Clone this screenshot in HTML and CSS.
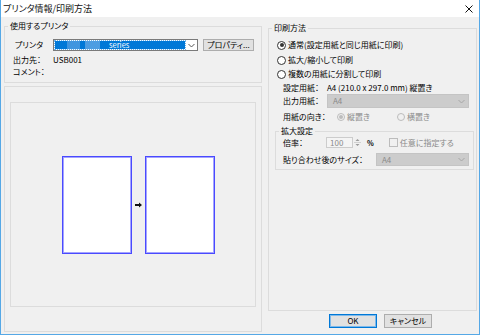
FILE: index.html
```html
<!DOCTYPE html>
<html lang="ja">
<head>
<meta charset="utf-8">
<title>プリンタ情報/印刷方法</title>
<link rel="stylesheet" href="styles.css">
</head>
<body>
<div class="window">
  <div class="titlebar">
    <span class="title">プリンタ情報/印刷方法</span>
    <svg class="close" width="8" height="8" viewBox="0 0 8 8"><path d="M0.5 0.5L7.5 7.5M7.5 0.5L0.5 7.5" stroke="#111" stroke-width="1" fill="none"/></svg>
  </div>
  <div class="content">
    <div class="left">
      <fieldset class="group printer">
        <legend>使用するプリンタ</legend>
        <div class="prow">
          <span class="plabel">プリンタ</span>
          <div class="pselect">
            <div class="hl"><span class="blur b1"></span><span class="blur b2"></span><span class="series">series</span></div>
            <svg class="chev" width="7" height="5" viewBox="0 0 7 5"><path d="M0.5 1L3.5 4L6.5 1" stroke="#555" stroke-width="1" fill="none"/></svg>
          </div>
          <span class="btn prop">プロパティ...</span>
        </div>
        <div class="info first"><span class="ilabel">出力先：</span><span>USB001</span></div>
        <div class="info"><span class="ilabel">コメント：</span></div>
      </fieldset>
      <div class="group preview">
        <div class="panel">
          <div class="page"></div>
          <svg class="arrow" width="7" height="6" viewBox="0 0 7 6"><path d="M0 2H4V0.5L7 3L4 5.5V4H0Z" fill="#111"/></svg>
          <div class="page"></div>
        </div>
      </div>
    </div>
    <div class="right">
      <fieldset class="group method">
        <legend>印刷方法</legend>
        <div class="rrow"><span class="radio on"></span><span>通常(設定用紙と同じ用紙に印刷)</span></div>
        <div class="rrow r2"><span class="radio"></span><span>拡大/縮小して印刷</span></div>
        <div class="rrow"><span class="radio"></span><span>複数の用紙に分割して印刷</span></div>
        <div class="srow setrow"><span class="slabel">設定用紙：</span><span>A4 (210.0 x 297.0 mm) 縦置き</span></div>
        <div class="srow outrow"><span class="slabel">出力用紙：</span>
          <div class="dsel wide"><span>A4</span><svg class="chev" width="7" height="5" viewBox="0 0 7 5"><path d="M0.5 1L3.5 4L6.5 1" stroke="#a6a6a6" stroke-width="1" fill="none"/></svg></div>
        </div>
        <div class="srow orient"><span class="olabel">用紙の向き：</span>
          <span class="opt"><span class="radio dis on"></span><span class="dtext">縦置き</span></span>
          <span class="opt"><span class="radio dis"></span><span class="dtext">横置き</span></span>
        </div>
        <fieldset class="group scale">
          <legend>拡大設定</legend>
          <div class="krow rate"><span class="klabel">倍率：</span>
            <span class="spin">100</span>
            <span class="spinbtn"><svg width="7" height="11" viewBox="0 0 7 11"><path d="M1.5 4L3.5 2L5.5 4Z M1.5 7L3.5 9L5.5 7Z" fill="#9a9a9a"/><path d="M0 5.5H7" stroke="#d0d0d0" stroke-width="1"/></svg></span>
            <span class="pct">%</span>
            <span class="check"></span><span class="dtext">任意に指定する</span>
          </div>
          <div class="krow size"><span class="klabel2">貼り合わせ後のサイズ：</span>
            <div class="dsel narrow"><span>A4</span><svg class="chev" width="7" height="5" viewBox="0 0 7 5"><path d="M0.5 1L3.5 4L6.5 1" stroke="#a6a6a6" stroke-width="1" fill="none"/></svg></div>
          </div>
        </fieldset>
      </fieldset>
      <div class="buttons">
        <span class="btn ok">OK</span>
        <span class="btn">キャンセル</span>
      </div>
    </div>
  </div>
</div>
</body>
</html>
```

FILE: styles.css
```css
html, body {
  margin: 0;
  padding: 0;
  background: #ffffff;
}
body {
  font-family: "Noto Sans CJK JP", "Noto Sans", sans-serif;
  font-size: 8px;
  font-feature-settings: "palt";
  color: #000;
  line-height: 12px;
}
.window {
  width: 480px;
  height: 335px;
  box-sizing: border-box;
  border: 1px solid #55a8e6;
  border-top: none;
  background: #f0f0f0;
  display: flex;
  flex-direction: column;
}
.titlebar {
  height: 17px;
  flex: none;
  background: #fff;
  display: flex;
  align-items: center;
  justify-content: space-between;
  padding: 0 6px 0 2px;
}
.title {
  font-size: 9px;
  color: #111;
}
.close {
  display: block;
}
.content {
  flex: 1;
  min-height: 0;
  display: flex;
  gap: 6px;
  padding: 0 2px 0 3px;
}
.left {
  width: 258px;
  display: flex;
  flex-direction: column;
}
.right {
  flex: 1;
  display: flex;
  flex-direction: column;
}
fieldset.group {
  margin: 0;
  padding: 0;
  border: 1px solid #dcdcdc;
  min-width: 0;
}
fieldset.group > legend {
  padding: 0 2px;
  margin-left: 3px;
  height: 12px;
  line-height: 12px;
}
.printer {
  margin-top: 3px !important;
  padding: 7px 0 4px 0 !important;
}
.prow {
  display: flex;
  align-items: center;
  height: 12px;
  padding-left: 10px;
}
.plabel {
  width: 38px;
}
.pselect {
  width: 145px;
  height: 12px;
  box-sizing: border-box;
  border: 1px solid #7a7a7a;
  background: #fff;
  display: flex;
  align-items: center;
  padding: 0 2px 0 1px;
  gap: 3px;
}
.hl {
  width: 131px;
  height: 8px;
  background: #0078d7;
  outline: 1px dotted #6fb3ea;
  display: flex;
  align-items: center;
  color: #fff;
  line-height: 8px;
}
.blur {
  height: 8px;
  background: #4095df;
}
.b1 { width: 13px; margin-left: 12px; }
.b2 { width: 15px; margin-left: 5px; background: #4d9de2; }
.series {
  margin-left: 9px;
  font-size: 7.5px;
}
.chev {
  display: block;
}
.btn {
  box-sizing: border-box;
  height: 12px;
  background: #e1e1e1;
  border: 1px solid #adadad;
  display: flex;
  align-items: center;
  justify-content: center;
  line-height: 10px;
}
.prop {
  width: 51px;
  margin-left: 5px;
}
.info {
  display: flex;
  align-items: center;
  height: 12px;
  padding-left: 8px;
}
.info.first {
  margin-top: 3px;
}
.ilabel {
  width: 40px;
}
.preview {
  flex: 1;
  margin-top: 3px;
  margin-bottom: 2px;
  border: 1px solid #dcdcdc;
  padding: 15px 5px 24px 5px;
  display: flex;
}
.panel {
  flex: 1;
  border: 1px solid #dcdcdc;
  display: flex;
  align-items: center;
  justify-content: center;
  gap: 3px;
  padding-left: 11px;
}
.page {
  width: 70px;
  height: 98px;
  box-sizing: border-box;
  border: 1px solid #4a4aff;
  box-shadow: inset 0 0 0 1px #a4a4ff;
  background: #fff;
}
.arrow {
  display: block;
}
.method {
  flex: 1;
  margin-top: 5px !important;
  padding: 4px 0 0 0 !important;
}
.rrow {
  display: flex;
  align-items: center;
  gap: 2px;
  height: 14px;
  padding-left: 8px;
}
.rrow.r2 {
  margin-top: 1px;
}
.radio {
  width: 9px;
  height: 9px;
  box-sizing: border-box;
  border: 1px solid #333;
  border-radius: 50%;
  background: #fff;
  display: flex;
  align-items: center;
  justify-content: center;
  flex: none;
}
.radio.on::after {
  content: "";
  width: 4px;
  height: 4px;
  border-radius: 50%;
  background: #333;
}
.radio.dis {
  width: 8px;
  height: 8px;
  border-color: #bcbcbc;
  background: #f0f0f0;
}
.radio.dis.on::after {
  width: 4px;
  height: 4px;
  background: #bcbcbc;
}
.srow {
  display: flex;
  align-items: center;
  padding-left: 14px;
}
.setrow {
  height: 12px;
  margin-top: 1px;
}
.slabel {
  width: 44px;
}
.outrow {
  height: 14px;
}
.dsel {
  box-sizing: border-box;
  height: 14px;
  background: #cccccc;
  border: 1px solid #c4c4c4;
  color: #8a8a8a;
  display: flex;
  align-items: center;
  justify-content: space-between;
  padding: 0 3px 0 5px;
}
.dsel.wide { width: 142px; }
.dsel.narrow { width: 93px; height: 13px; }
.orient {
  height: 14px;
  margin-top: 2px;
}
.olabel {
  width: 54px;
}
.opt {
  display: flex;
  align-items: center;
  gap: 2px;
  width: 60px;
}
.dtext {
  color: #8a8a8a;
}
.scale {
  margin: 1px 2px 0 6px !important;
  padding: 0 0 3px 0 !important;
}
.krow {
  display: flex;
  align-items: center;
  padding-left: 7px;
}
.rate {
  height: 11px;
}
.klabel {
  width: 43px;
}
.spin {
  box-sizing: border-box;
  width: 27px;
  height: 11px;
  border: 1px solid #cccccc;
  background: #f4f4f4;
  color: #8a8a8a;
  line-height: 9px;
  padding-left: 3px;
}
.spinbtn {
  box-sizing: border-box;
  width: 7px;
  height: 11px;
  margin-left: 1px;
  display: block;
}
.spinbtn svg { display: block; }
.pct {
  margin-left: 6px;
  font-weight: bold;
  font-size: 7px;
}
.check {
  width: 9px;
  height: 9px;
  box-sizing: border-box;
  border: 1px solid #bcbcbc;
  background: #f0f0f0;
  margin-left: 15px;
  margin-right: 2px;
}
.size {
  height: 13px;
  margin-top: 5px;
}
.klabel2 {
  width: 93px;
}
.buttons {
  height: 14px;
  flex: none;
  margin: 3px 0 6px 0;
  display: flex;
  justify-content: flex-end;
  gap: 7px;
  padding-right: 45px;
}
.buttons .btn {
  width: 48px;
  height: 14px;
}
.btn.ok {
  border-color: #0078d7;
  box-shadow: inset 0 0 0 1px #7fb9e9;
}
```
